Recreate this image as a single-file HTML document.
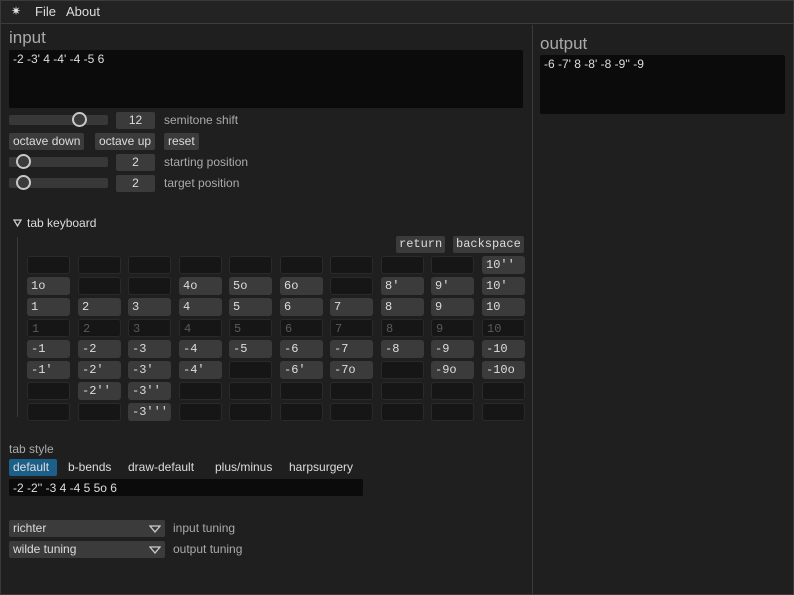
<!DOCTYPE html>
<html><head><meta charset="utf-8"><style>
*{margin:0;padding:0;box-sizing:border-box}
body{width:794px;height:595px;background:#1f1f1f;font-family:"Liberation Sans","DejaVu Sans",sans-serif;color:#ddd;font-size:12px;position:relative;overflow:hidden}
.a{position:absolute;white-space:nowrap}
.frame{position:absolute;left:0;top:0;width:794px;height:595px;border:1px solid #3a3a3a}
.menu{left:1px;top:1px;width:792px;height:23px;background:#232323;border-bottom:1px solid #3c3c3c}
.box{background:#0b0b0b;border-radius:2px}
.btn{background:#3b3b3b;border-radius:2px;color:#ddd;line-height:17px;height:17px;padding:0 4px;font-size:12px}
.lbl{color:#aaa;font-size:12px}
.track{background:#383838;height:10px;width:99px;left:9px;border-radius:2px}
.knob{width:15px;height:15px;border-radius:50%;border:2px solid #c8c8c8;background:#3b3b3b}
.num{background:#3b3b3b;width:39px;height:17px;left:116px;text-align:center;line-height:17px;color:#ddd;border-radius:2px}
.k{position:absolute;width:43px;height:18px;border-radius:3px;font-family:"Liberation Mono",monospace;font-size:12px;line-height:18px;padding-left:4px;color:#ddd}
.f{background:#3b3b3b}
.e{background:#161616;border:1px solid #2a2a2a}
.d{background:#161616;border:1px solid #2a2a2a;color:#5a5a5a}
.kb{font-family:"Liberation Mono",monospace;font-size:12px;background:#3b3b3b;height:17px;line-height:17px;padding:0 3px;border-radius:2px}
.combo{left:9px;width:156px;height:17px;background:#3b3b3b;border-radius:2px;line-height:17px;padding-left:4px}
</style></head><body>
<div class="frame"></div>
<div class="a menu"></div>
<div class="a" style="left:11px;top:4px;font-size:12px">✷</div>
<div class="a" style="left:35px;top:4px;font-size:13px">File</div>
<div class="a" style="left:66px;top:4px;font-size:13px">About</div>
<div class="a" style="left:532px;top:25px;width:1px;height:569px;background:#3a3a3a"></div>

<div class="a" style="left:9px;top:28px;font-size:17px;color:#aaa">input</div>
<div class="a box" style="left:9px;top:50px;width:514px;height:58px"></div>
<div class="a" style="left:13px;top:52px">-2 -3' 4 -4' -4 -5 6</div>

<div class="a" style="left:540px;top:34px;font-size:17px;color:#aaa">output</div>
<div class="a box" style="left:540px;top:55px;width:245px;height:59px"></div>
<div class="a" style="left:544px;top:57px">-6 -7' 8 -8' -8 -9'' -9</div>

<div class="a track" style="top:115px"></div>
<div class="a knob" style="left:72px;top:112px"></div>
<div class="a num" style="top:112px">12</div>
<div class="a lbl" style="left:164px;top:113px">semitone shift</div>

<div class="a btn" style="left:9px;top:133px">octave down</div>
<div class="a btn" style="left:95px;top:133px">octave up</div>
<div class="a btn" style="left:164px;top:133px">reset</div>

<div class="a track" style="top:157px"></div>
<div class="a knob" style="left:16px;top:154px"></div>
<div class="a num" style="top:154px">2</div>
<div class="a lbl" style="left:164px;top:155px">starting position</div>

<div class="a track" style="top:178px"></div>
<div class="a knob" style="left:16px;top:175px"></div>
<div class="a num" style="top:175px">2</div>
<div class="a lbl" style="left:164px;top:176px">target position</div>

<svg class="a" style="left:13px;top:219px" width="9" height="8"><path d="M1 1H8L4.5 7Z" fill="none" stroke="#ccc" stroke-width="1.3"/></svg>
<div class="a" style="left:27px;top:216px">tab keyboard</div>
<div class="a" style="left:17px;top:237px;width:1px;height:180px;background:#3a3a3a"></div>
<div class="a kb" style="left:396px;top:236px">return</div>
<div class="a kb" style="left:453px;top:236px">backspace</div>

<div id="g"></div>
<script>
var rows=[
["e","","e","","e","","e","","e","","e","","e","","e","","e","","f","10''"],
["f","1o","e","","e","","f","4o","f","5o","f","6o","e","","f","8'","f","9'","f","10'"],
["f","1","f","2","f","3","f","4","f","5","f","6","f","7","f","8","f","9","f","10"],
["d","1","d","2","d","3","d","4","d","5","d","6","d","7","d","8","d","9","d","10"],
["f","-1","f","-2","f","-3","f","-4","f","-5","f","-6","f","-7","f","-8","f","-9","f","-10"],
["f","-1'","f","-2'","f","-3'","f","-4'","e","","f","-6'","f","-7o","e","","f","-9o","f","-10o"],
["e","","f","-2''","f","-3''","e","","e","","e","","e","","e","","e","","e",""],
["e","","e","","f","-3'''","e","","e","","e","","e","","e","","e","","e",""]];
var h="";
for(var r=0;r<8;r++)for(var c=0;c<10;c++){
var x=Math.round(27+c*50.5),y=256+r*21;
h+='<div class="k '+rows[r][c*2]+'" style="left:'+x+'px;top:'+y+'px">'+rows[r][c*2+1]+'</div>';}
document.getElementById("g").innerHTML=h;
</script>

<div class="a lbl" style="left:9px;top:442px">tab style</div>
<div class="a" style="left:9px;top:459px;width:48px;height:17px;background:#1c5f88;border-radius:2px"></div>
<div class="a" style="left:13px;top:460px">default</div>
<div class="a" style="left:68px;top:460px">b-bends</div>
<div class="a" style="left:128px;top:460px">draw-default</div>
<div class="a" style="left:215px;top:460px">plus/minus</div>
<div class="a" style="left:289px;top:460px">harpsurgery</div>
<div class="a box" style="left:9px;top:479px;width:354px;height:17px"></div>
<div class="a" style="left:13px;top:481px">-2 -2'' -3 4 -4 5 5o 6</div>

<div class="a combo" style="top:520px">richter<svg style="position:absolute;right:4px;top:5px" width="12" height="8"><path d="M1 1H11L6 7Z" fill="none" stroke="#ccc" stroke-width="1.3"/></svg></div>
<div class="a lbl" style="left:173px;top:521px">input tuning</div>
<div class="a combo" style="top:541px">wilde tuning<svg style="position:absolute;right:4px;top:5px" width="12" height="8"><path d="M1 1H11L6 7Z" fill="none" stroke="#ccc" stroke-width="1.3"/></svg></div>
<div class="a lbl" style="left:173px;top:542px">output tuning</div>
</body></html>
